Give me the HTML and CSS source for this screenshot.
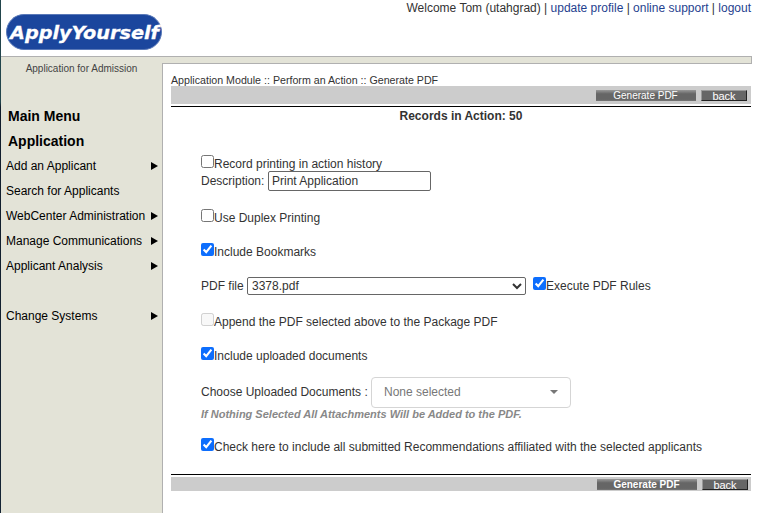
FILE: index.html
```html
<!DOCTYPE html>
<html lang="en">
<head>
<meta charset="utf-8">
<title>Generate PDF</title>
<link rel="stylesheet" href="styles.css">
</head>
<body>
<div class="page">
  <header class="header">
    <svg class="logo" width="156" height="36" viewBox="0 0 156 36" role="img" aria-label="ApplyYourself">
      <rect x=".5" y=".5" width="155" height="35" rx="17.5" fill="#1b469d" stroke="#5a79b8"/>
      <text class="logo-text" x="4" y="24.500" textLength="149" lengthAdjust="spacingAndGlyphs">ApplyYourself</text>
    </svg>
    <nav class="account">Welcome Tom (utahgrad) | <a href="#">update profile</a> | <a href="#">online support</a> | <a href="#">logout</a></nav>
  </header>
  <div class="body">
    <aside class="sidebar">
      <div class="product">Application for Admission</div>
      <h2>Main Menu</h2>
      <h2>Application</h2>
      <ul class="menu">
        <li class="sub">Add an Applicant</li>
        <li>Search for Applicants</li>
        <li class="sub">WebCenter Administration</li>
        <li class="sub">Manage Communications</li>
        <li class="sub">Applicant Analysis</li>
        <li></li>
        <li class="sub">Change Systems</li>
      </ul>
    </aside>
    <main class="main">
      <div class="strip"></div>
      <div class="content">
        <div class="crumbs">Application Module :: Perform an Action :: Generate PDF</div>
        <div class="bar bar-top"><button class="generate">Generate PDF</button><button class="back">back</button></div>
        <div class="records">Records in Action: 50</div>
        <form class="form">
          <label class="row history"><input type="checkbox"><span>Record printing in action history</span></label>
          <div class="row description"><span>Description:</span><input type="text" value="Print Application"></div>
          <label class="row duplex"><input type="checkbox"><span>Use Duplex Printing</span></label>
          <label class="row bookmarks"><input type="checkbox" checked><span>Include Bookmarks</span></label>
          <div class="row file"><span>PDF file</span><select><option>3378.pdf</option></select><input type="checkbox" checked><span>Execute PDF Rules</span></div>
          <label class="row append"><input type="checkbox" disabled><span>Append the PDF selected above to the Package PDF</span></label>
          <label class="row uploaded"><input type="checkbox" checked><span>Include uploaded documents</span></label>
          <div class="row choose"><span>Choose Uploaded Documents :</span><button type="button" class="dropdown">None selected</button></div>
          <div class="hint">If Nothing Selected All Attachments Will be Added to the PDF.</div>
          <label class="row recs"><input type="checkbox" checked><span>Check here to include all submitted Recommendations affiliated with the selected applicants</span></label>
        </form>
        <div class="bar bar-bottom"><button class="generate">Generate PDF</button><button class="back">back</button></div>
      </div>
    </main>
  </div>
</div>
</body>
</html>
```
FILE: styles.css
```css
* { box-sizing: border-box; }
body {
  margin: 0;
  background: #fff;
  color: #333;
  font: 12px/14px "Liberation Sans", Arial, sans-serif;
}
.page {
  display: flex;
  flex-direction: column;
  height: 513px;
  overflow: hidden;
  border-left: 1px solid;
  border-image: linear-gradient(#22454c 0 20%, #101c2b 21%, #142434) 1;
}
.header {
  display: flex;
  justify-content: space-between;
  align-items: flex-start;
  height: 56px;
  padding: 0 19px 0 5px;
}
.logo { display: block; margin-top: 14px; }
.logo-text {
  font: italic bold 18.5px "DejaVu Sans", Verdana, sans-serif;
  fill: #fff;
  stroke: #fff;
  stroke-width: .3px;
}
.account { padding-top: 1px; }
.account a { color: #1f3f8f; text-decoration: none; }

.body { display: flex; width: 751px; flex: 1; border-top: 1px solid #b0b0b0; }
.sidebar { width: 161px; background: #e3e3d7; color: #000; }
.product {
  padding-top: 5px;
  height: 47px;
  text-align: center;
  font-size: 10px;
  color: #444;
}
.sidebar h2 {
  margin: 0;
  padding-left: 7px;
  height: 25px;
  font-size: 14px;
  line-height: 25px;
}
.menu { margin: -1px 0 0; padding: 0; list-style: none; }
.menu li {
  display: flex;
  justify-content: space-between;
  align-items: center;
  height: 25px;
  padding: 0 4px 0 5px;
  white-space: nowrap;
}
.sub::after {
  content: "";
  border: solid transparent;
  border-width: 4px 0 4px 7px;
  border-left-color: #000;
}
.main { flex: 1; display: flex; flex-direction: column; }
.strip { height: 6px; background: #e3e3d7; border-right: 1px solid #b0b0b0; }
.content {
  flex: 1;
  border-top: 1px solid #b0b0b0;
  border-left: 1px solid #b0b0b0;
  padding: 10px 1px 0 8px;
}
.crumbs { height: 12px; font-size: 10.66px; line-height: 13px; }
.bar {
  display: flex;
  justify-content: flex-end;
  gap: 5px;
  background: #ccc;
}
.bar-top { height: 18px; padding: 4px 4px 0 0; }
.bar-bottom { height: 14px; padding: 2px 3px 0 0; }
.bar button {
  height: 11px;
  padding: 0;
  border: 0;
  background: linear-gradient(#999, #666 35%, #666 85%, #777);
  color: #fff;
  font: 10px/10px "Liberation Sans", Arial, sans-serif;
}
.bar .generate { width: 100px; padding-right: 1px; }
.bar-bottom .generate { font-weight: bold; }
.bar .back {
  width: 46px;
  border: 1px solid;
  border-color: #999 #222 #222 #999;
  background: #666;
  font-size: 11px;
  line-height: 8px;
}
.records {
  margin-top: 2px;
  padding-top: 2px;
  height: 49px;
  border-top: 1px solid #000;
  text-align: center;
  font-weight: bold;
}
.form { padding-left: 30px; height: 320px; border-bottom: 1px solid #000; margin-bottom: 2px; }
.row { display: flex; align-items: flex-start; white-space: nowrap; }
.row > span { padding-top: 2px; }
.row input[type="checkbox"] { margin: 0; width: 13px; height: 13px; flex: none; accent-color: #0d6efd; }
.history { height: 16px; }
.description { height: 38px; }
.description span { padding-top: 3px; width: 67px; }
.description input {
  width: 163px;
  height: 20px;
  padding: 1px 3px;
  border: 1px solid #666;
  border-radius: 2px;
  color: #333;
  font: inherit;
}
.duplex, .bookmarks, .append { height: 34px; }
.file { height: 36px; }
.file span:first-child { width: 46px; }
.file select {
  width: 279px;
  height: 18px;
  margin-right: 7px;
  padding: 0;
  border: 1px solid #666;
  border-radius: 2px;
  background: #fff;
  color: #333;
  font: inherit;
}
.uploaded { height: 30px; }
.choose { height: 31px; }
.choose span { width: 170px; padding-top: 8px; }
.dropdown {
  display: flex;
  justify-content: space-between;
  align-items: center;
  width: 200px;
  height: 31px;
  padding: 0 12px 1px;
  border: 1px solid #d5d5d5;
  border-radius: 4px;
  background: #fff;
  color: #777;
  font: inherit;
}
.dropdown::after {
  content: "";
  border: solid transparent;
  border-width: 4px 4px 0;
  border-top-color: #777;
}
.hint {
  height: 30px;
  font: italic bold 11px/13px "Liberation Sans", Arial, sans-serif;
  color: #888;
}
```
